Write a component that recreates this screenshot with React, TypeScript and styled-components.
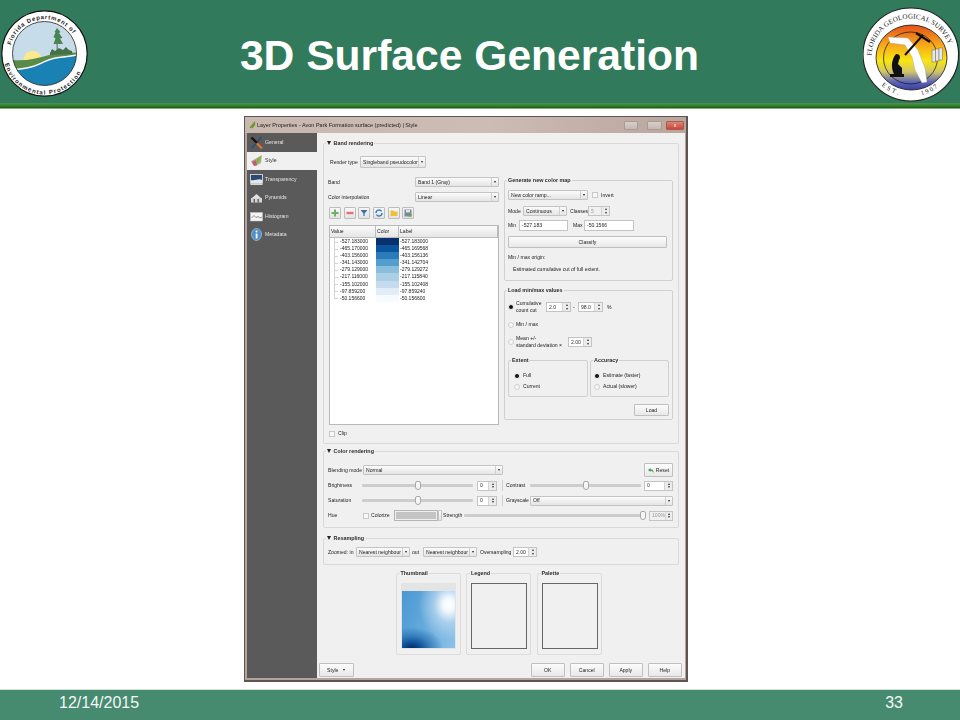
import { FC, ReactNode } from "react";
import styled, { createGlobalStyle } from "styled-components";

const GlobalStyle = createGlobalStyle`
  html, body {
    margin: 0;
    padding: 0;
    background: #fff;
    font-family: "Liberation Sans", Arial, sans-serif;
  }
`;

const Slide = styled.div`
  width: 960px;
  height: 720px;
  display: flex;
  flex-direction: column;
  overflow: hidden;
`;

const Header = styled.header`
  height: 103px;
  display: grid;
  grid-template-columns: 89px 1fr 97px;
  align-items: start;
  background: #317a5b;
`;

const Title = styled.h1`
  margin: 30px 13px 0 0;
  font-size: 42.6px;
  line-height: 50px;
  font-weight: 700;
  color: #fff;
  text-align: center;
`;

const Band = styled.div`
  height: 6px;
  background: linear-gradient(#4f8f5f 0, #3c8a32 30%, #2c7420 60%, #1c5a18 80%, #d8e0d8 100%);
`;

const Stage = styled.main`
  height: 580px;
  padding: 7px 0 0 244px;
  box-sizing: border-box;
`;

const Footer = styled.footer`
  height: 31px;
  box-sizing: border-box;
  padding: 3px 57px 0 59px;
  display: flex;
  justify-content: space-between;
  border-top: 1px solid #cfe0d8;
  background: #468b70;
  color: #f4f8f6;
  font-size: 16px;
  line-height: 20px;
`;

const Window = styled.div`
  width: 444px;
  height: 566px;
  box-sizing: border-box;
  display: flex;
  flex-direction: column;
  border: 1px solid #5f5552;
  border-width: 1px 2px 2px 1px;
  background: #f0f0f0;
  color: #222;
  font-size: 5.1px;
  line-height: 7px;
  filter: blur(0.25px);
`;

const TitleBar = styled.div`
  height: 16px;
  flex: none;
  display: flex;
  align-items: center;
  gap: 1px;
  padding: 0 2px 0 4px;
  background: linear-gradient(90deg, #c9b8b0, #cdbcb4 55%, #b9a69e);
  color: #222;
  font-size: 5.5px;
`;

const TitleText = styled.span`
  flex: 1;
`;

const WinButton = styled.span<{ $w: number; $gap?: number; $close?: boolean }>`
  width: ${({ $w }) => $w}px;
  height: 7px;
  margin-right: ${({ $gap }) => $gap ?? 0}px;
  border: 1px solid ${({ $close }) => ($close ? "#b0564a" : "#a99a94")};
  border-radius: 1px;
  background: ${({ $close }) =>
    $close ? "linear-gradient(#dc8578, #c8473a)" : "linear-gradient(#d8cfca, #c4b8b2)"};
  color: #fff;
  font-size: 5px;
  line-height: 7px;
  text-align: center;
`;

const WindowBody = styled.div`
  flex: 1;
  min-height: 0;
  display: flex;
  border-left: 2px solid #b5a49c;
  border-right: 1px solid #b5a49c;
  border-bottom: 2px solid #b5a49c;
`;

const Sidebar = styled.nav`
  width: 70px;
  flex: none;
  background: #5a5a5a;
`;

const NavItem = styled.div<{ $active?: boolean }>`
  height: 18.5px;
  display: flex;
  align-items: center;
  gap: 2px;
  padding-left: 3px;
  background: ${({ $active }) => ($active ? "#f0f0f0" : "transparent")};
  color: ${({ $active }) => ($active ? "#333" : "#e4e4e4")};
  font-size: 5.2px;
`;

const NavIcon = styled.svg`
  width: 13px;
  height: 13px;
  flex: none;
`;

const Panel = styled.section`
  flex: 1;
  min-width: 0;
  display: flex;
  flex-direction: column;
  padding-top: 10px;
`;

const Group = styled.div<{ $h: number; $mt?: number }>`
  position: relative;
  height: ${({ $h }) => $h}px;
  margin: ${({ $mt }) => $mt ?? 0}px 6px 0;
  box-sizing: border-box;
  border: 1px solid #d9d9d9;
  border-radius: 2px;
`;

const Legend = styled.span<{ $left?: number }>`
  position: absolute;
  top: -4px;
  left: ${({ $left }) => $left ?? 2}px;
  padding: 0 1px;
  background: #f0f0f0;
  color: #2c2c2c;
  font-size: 5.4px;
  font-weight: 700;
  white-space: nowrap;
`;

const Triangle = styled.i`
  display: inline-block;
  margin-right: 2.5px;
  border: 2.5px solid transparent;
  border-top: 4px solid #222;
  border-bottom: 0;
  vertical-align: 0.5px;
`;

const BandBody = styled.div`
  padding: 12px 4px 0 4px;
`;

const ResampleBody = styled.div`
  padding: 8px 4px 0 4px;
`;

const ColorBody = styled.div`
  padding: 11px 5px 0 4px;
`;

const Row = styled.div<{ $gap?: number; $h?: number; $mt?: number }>`
  display: flex;
  align-items: center;
  gap: ${({ $gap }) => $gap ?? 3}px;
  height: ${({ $h }) => $h ?? 11}px;
  margin-top: ${({ $mt }) => $mt ?? 0}px;
  white-space: nowrap;
`;

const Columns = styled.div`
  display: grid;
  grid-template-columns: 171px 169px;
  column-gap: 5px;
  margin-top: 9px;
`;

const Column = styled.div`
  display: flex;
  flex-direction: column;
`;

const Label = styled.span<{ $w?: number; $ml?: number }>`
  flex: ${({ $w }) => ($w ? "none" : "0 1 auto")};
  width: ${({ $w }) => ($w ? `${$w}px` : "auto")};
  margin-left: ${({ $ml }) => $ml ?? 0}px;
`;

const SelectBox = styled.div<{ $w: number; $ml?: number; $h?: number; $bare?: boolean }>`
  width: ${({ $w }) => $w}px;
  height: ${({ $h }) => $h ?? 10}px;
  margin-left: ${({ $ml }) => $ml ?? 0}px;
  flex: none;
  box-sizing: border-box;
  display: flex;
  align-items: center;
  justify-content: space-between;
  padding-left: ${({ $bare }) => ($bare ? 0 : 2)}px;
  border: 1px solid #c4c4c4;
  border-radius: 1px;
  background: linear-gradient(#fbfbfb, #e4e4e4);
  overflow: hidden;
  white-space: nowrap;
`;

const SelectArrow = styled.span`
  width: 7px;
  height: 100%;
  flex: none;
  box-sizing: border-box;
  display: flex;
  align-items: center;
  justify-content: center;
  border-left: 1px solid #cfcfcf;
  &::after {
    content: "";
    border: 1.5px solid transparent;
    border-top: 2.5px solid #222;
    border-bottom: 0;
  }
`;

const Select: FC<{ w: number; h?: number; ml?: number; children: ReactNode }> = ({
  w,
  h,
  ml,
  children,
}) => (
  <SelectBox $w={w} $h={h} $ml={ml}>
    <span>{children}</span>
    <SelectArrow />
  </SelectBox>
);

const SpinBox = styled.div<{ $w: number; $ml?: number; $off?: boolean }>`
  width: ${({ $w }) => $w}px;
  height: 10px;
  margin-left: ${({ $ml }) => $ml ?? 0}px;
  flex: none;
  box-sizing: border-box;
  display: flex;
  justify-content: space-between;
  align-items: center;
  padding-left: 2px;
  border: 1px solid #c4c4c4;
  background: ${({ $off }) => ($off ? "#f0f0f0" : "#fff")};
  color: ${({ $off }) => ($off ? "#999" : "#333")};
`;

const SpinArrows = styled.span`
  width: 7px;
  height: 100%;
  display: flex;
  flex-direction: column;
  align-items: center;
  justify-content: space-evenly;
  background: #ececec;
  border-left: 1px solid #d4d4d4;
  &::before {
    content: "";
    border: 1.5px solid transparent;
    border-bottom: 2px solid #333;
    border-top: 0;
  }
  &::after {
    content: "";
    border: 1.5px solid transparent;
    border-top: 2px solid #333;
    border-bottom: 0;
  }
`;

const Spin: FC<{ w: number; ml?: number; off?: boolean; children: ReactNode }> = ({
  w,
  ml,
  off,
  children,
}) => (
  <SpinBox $w={w} $ml={ml} $off={off}>
    <span>{children}</span>
    <SpinArrows />
  </SpinBox>
);

const Input = styled.div<{ $w: number }>`
  width: ${({ $w }) => $w}px;
  height: 11px;
  flex: none;
  box-sizing: border-box;
  padding: 1px 2px;
  border: 1px solid #c4c4c4;
  background: #fff;
`;

const Check = styled.span<{ $ml?: number }>`
  width: 6px;
  height: 6px;
  flex: none;
  margin-left: ${({ $ml }) => $ml ?? 0}px;
  box-sizing: border-box;
  border: 1px solid #c8c8c8;
  background: #f8f8f8;
`;

const Radio = styled.span<{ $on?: boolean }>`
  width: 6px;
  height: 6px;
  flex: none;
  box-sizing: border-box;
  border-radius: 50%;
  border: 1px solid ${({ $on }) => ($on ? "#f0f0f0" : "#cfcfcf")};
  background: ${({ $on }) => ($on ? "#111" : "#f8f8f8")};
`;

const ToolBar = styled.div`
  display: flex;
  gap: 2.7px;
  margin: 5px 0 6px 1px;
`;

const ToolButton = styled.span`
  width: 12px;
  height: 12px;
  box-sizing: border-box;
  display: flex;
  align-items: center;
  justify-content: center;
  border: 1px solid #bdbdbd;
  border-radius: 1px;
  background: linear-gradient(#f6f6f6, #e4e4e4);
`;

const ToolIcon = styled.svg`
  width: 8px;
  height: 8px;
`;

const Table = styled.div`
  margin-left: 1px;
  width: 170px;
  height: 200px;
  box-sizing: border-box;
  border: 1px solid #b9b9b9;
  background: #fff;
`;

const TableHead = styled.div`
  height: 11px;
  display: grid;
  grid-template-columns: 46px 23px 1fr;
  background: linear-gradient(#fafafa, #e6e6e6);
  border-bottom: 1px solid #bcbcbc;
`;

const HeadCell = styled.span`
  padding: 2px 1px 0 1px;
  border-right: 1px solid #bcbcbc;
`;

const DataRow = styled.div`
  height: 7.1px;
  display: grid;
  grid-template-columns: 46px 23px 1fr;
  line-height: 7.1px;
  font-size: 5px;
`;

const ValueCell = styled.span<{ $last?: boolean }>`
  position: relative;
  padding-left: 10px;
  &::before {
    content: "";
    position: absolute;
    left: 4px;
    top: 0;
    width: 4px;
    height: ${({ $last }) => ($last ? "3.5px" : "100%")};
    border-left: 1px solid #d4d4d4;
  }
  &::after {
    content: "";
    position: absolute;
    left: 4px;
    top: 3.5px;
    width: 4px;
    border-top: 1px solid #d4d4d4;
  }
`;

const Swatch = styled.span<{ $color: string }>`
  display: block;
  background: ${({ $color }) => $color};
`;

const LabelCell = styled.span`
  padding-left: 1px;
`;

const SubGroup = styled.div<{ $h: number; $mt?: number; $w?: number; $inset?: number }>`
  position: relative;
  height: ${({ $h }) => $h}px;
  width: ${({ $w }) => ($w ? `${$w}px` : "auto")};
  margin-top: ${({ $mt }) => $mt ?? 0}px;
  box-sizing: border-box;
  flex: none;
  padding: 5px 5px 0 ${({ $inset }) => $inset ?? 3}px;
  border: 1px solid #d0d0d0;
  border-radius: 2px;
`;

const PlainButton = styled.div<{ $w?: number; $h?: number; $mt?: number; $ml?: number }>`
  width: ${({ $w }) => ($w ? `${$w}px` : "auto")};
  height: ${({ $h }) => $h ?? 13}px;
  margin: ${({ $mt }) => $mt ?? 0}px 0 0 ${({ $ml }) => $ml ?? 0}px;
  flex: none;
  box-sizing: border-box;
  display: flex;
  align-items: center;
  justify-content: center;
  gap: 2px;
  border: 1px solid #c0c0c0;
  border-radius: 1px;
  background: linear-gradient(#fcfcfc, #e8e8e8);
`;

const Note = styled.div<{ $mt: number; $ml?: number }>`
  margin: ${({ $mt }) => $mt}px 0 0 ${({ $ml }) => $ml ?? 0}px;
`;

const TwoLine = styled.span<{ $w: number }>`
  display: block;
  flex: none;
  width: ${({ $w }) => $w}px;
  line-height: 7px;
`;

const Split = styled.div`
  display: flex;
  gap: 2px;
  margin-top: 11px;
`;

const LoadRow = styled.div`
  display: flex;
  justify-content: flex-end;
  margin: 7px -2px 0 0;
`;

const Slider = styled.div<{ $w: number; $at: string; $ml?: number }>`
  position: relative;
  width: ${({ $w }) => $w}px;
  height: 3px;
  margin-left: ${({ $ml }) => $ml ?? 0}px;
  flex: none;
  border-radius: 1px;
  background: #cdcdcd;
  &::after {
    content: "";
    position: absolute;
    left: ${({ $at }) => $at};
    top: -3px;
    width: 6px;
    height: 9px;
    box-sizing: border-box;
    border: 1px solid #a8a8a8;
    border-radius: 2px 2px 3px 3px;
    background: #f6f6f6;
  }
`;

const Separator = styled.span<{ $ml: number }>`
  width: 1px;
  height: 11px;
  flex: none;
  margin-left: ${({ $ml }) => $ml}px;
  background: #cfcfcf;
`;

const ColorWell = styled.div`
  width: 44px;
  height: 11px;
  flex: none;
  box-sizing: border-box;
  margin-left: 4px;
  border: 1px solid #b4b4b4;
  background: #c4c4c4;
  box-shadow: inset 0 0 0 1px #f0f0f0;
`;

const PreviewRow = styled.div`
  display: flex;
  justify-content: center;
  gap: 5.5px;
  margin-top: 8px;
  padding-right: 5px;
`;

const PreviewBox = styled.div`
  position: relative;
  width: 65px;
  height: 82px;
  box-sizing: border-box;
  padding: 9px 4px 0 4px;
  border: 1px solid #dcdcdc;
  border-radius: 2px;
`;

const Canvas = styled.div`
  width: 56px;
  height: 66px;
  box-sizing: border-box;
  border: 1px solid #666;
`;

const Thumb = styled.div`
  width: 55px;
  height: 66px;
  box-sizing: border-box;
  border: 1px solid #e4e4e4;
  border-top-width: 8px;
  background:
    radial-gradient(ellipse 30px 36px at 88% 24%, #ffffff 0, #f4f9fd 18%, rgba(190, 218, 240, 0.7) 50%, rgba(190, 218, 240, 0) 100%),
    radial-gradient(ellipse 32px 22px at 18% 102%, #05245a 0, #0a4a92 25%, rgba(30, 104, 172, 0.65) 60%, rgba(40, 120, 184, 0) 100%),
    linear-gradient(110deg, #4a98d2 0, #66abdc 50%, #8cc2e8 100%);
`;

const ButtonRow = styled.div`
  display: flex;
  gap: 4.5px;
  margin-top: 8px;
  padding: 0 3px 0 2px;
`;

const DialogButton = styled.div<{ $first?: boolean }>`
  width: 34.5px;
  height: 14px;
  box-sizing: border-box;
  display: flex;
  align-items: center;
  justify-content: center;
  gap: 5px;
  margin-right: ${({ $first }) => ($first ? "auto" : "0")};
  border: 1px solid #c0c0c0;
  border-radius: 1px;
  background: linear-gradient(#fcfcfc, #e8e8e8);
`;

const SmallCaret = styled.i`
  border: 1.5px solid transparent;
  border-top: 2px solid #222;
  border-bottom: 0;
`;

const rampRows = [
  ["-527.183000", "#08306b", "-527.183000"],
  ["-465.170000", "#0b559f", "-465.169568"],
  ["-403.156000", "#2b7bba", "-403.156136"],
  ["-341.143000", "#539ecd", "-341.142704"],
  ["-279.129000", "#89bedc", "-279.129272"],
  ["-217.116000", "#abd0e6", "-217.115840"],
  ["-155.102000", "#c7dbef", "-155.102408"],
  ["-97.859200", "#e0ecf8", "-97.859240"],
  ["-50.156600", "#f7fbff", "-50.156600"],
];

const DepLogo = styled.svg`
  display: block;
  width: 89px;
  height: 103px;
`;

const GeoLogo = styled.svg`
  display: block;
  width: 97px;
  height: 103px;
`;

const FloridaDep: FC = () => (
  <DepLogo viewBox="0 0 89 103">
    <defs>
      <path id="depTop" d="M10.5 59.5 A34.5 34.5 0 1 1 78.5 59.5" />
      <path id="depBottom" d="M3.5 53.5 A41 41 0 0 0 85.5 53.5" />
      <clipPath id="depClip">
        <circle cx="44.5" cy="53.5" r="32" />
      </clipPath>
    </defs>
    <circle cx="44.5" cy="53.5" r="42.7" fill="#fff" stroke="#111" strokeWidth="1.2" />
    <g clipPath="url(#depClip)">
      <rect x="10" y="20" width="70" height="70" fill="#c6dde9" />
      <circle cx="32.5" cy="60" r="9.2" fill="#fbe88f" />
      <path d="M12 60 Q24 61 33 59 T53 54 T78 53 V72 H12 Z" fill="#5a8a48" />
      <path d="M12 69 Q30 68 40 63 T57 57 T78 54 V90 H12 Z" fill="#fff" />
      <path d="M12 70.5 Q30 69.5 40 64.5 T57 58.5 T78 55.5 V90 H12 Z" fill="#1a81b5" />
      <path d="M56.6 52 h1 v-22 h-1z" fill="#6a6248" />
      <path d="M57 28 L60.5 32 L59 33 L62.5 38 L60 38.5 L63 44 L53.5 44 L55.5 38.5 L53.5 37 L55.5 32.5 L54.5 32 Z" fill="#4a8452" />
      <path d="M50 53 L52 49 L55 51 L59 48 L63 50 L66 47 L69 50 L72 51 L72 54 L50 55 Z" fill="#45704a" />
    </g>
    <circle cx="44.5" cy="53.5" r="32" fill="none" stroke="#222" strokeWidth="0.8" />
    <text fontFamily="Liberation Sans" fontSize="6" fontWeight="700" fill="#222" letterSpacing="0.8">
      <textPath href="#depTop" startOffset="12%">Florida Department of</textPath>
    </text>
    <text fontFamily="Liberation Sans" fontSize="6" fontWeight="700" fill="#222" letterSpacing="1.1">
      <textPath href="#depBottom" startOffset="8%">Environmental Protection</textPath>
    </text>
  </DepLogo>
);

const FloridaGeo: FC = () => (
  <GeoLogo viewBox="0 0 97 103">
    <defs>
      <linearGradient id="geoSky" x1="0" y1="0" x2="0" y2="1">
        <stop offset="0" stopColor="#e4501c" />
        <stop offset="0.28" stopColor="#f6a21a" />
        <stop offset="0.55" stopColor="#f8e612" />
        <stop offset="0.72" stopColor="#d0c468" />
        <stop offset="0.88" stopColor="#5a62b8" />
        <stop offset="1" stopColor="#3a3ea0" />
      </linearGradient>
      <path id="geoTop" d="M8.5 57 A39.5 38.5 0 0 1 87.5 57" />
      <path id="geoBottom" d="M4.3 54.5 A43.5 42 0 0 0 91.3 54.5" />
    </defs>
    <ellipse cx="47.8" cy="54.5" rx="47.8" ry="46.5" fill="#fff" stroke="#222" strokeWidth="1.2" />
    <ellipse cx="48.5" cy="57.5" rx="35.5" ry="32.5" fill="url(#geoSky)" stroke="#111" strokeWidth="0.8" />
    <ellipse cx="47.5" cy="58" rx="27" ry="26" fill="none" stroke="#111" strokeWidth="0.7" />
    <path d="M25 37 L45 38 L55 50 L62 68 L64 82 L59 83 L52 70 L49 57 L42 45 L27 43 Z" fill="#fff" stroke="#999" strokeWidth="0.4" />
    <path d="M42 55 L60 35" stroke="#111" strokeWidth="2" fill="none" />
    <path d="M53 33 L67 42" stroke="#111" strokeWidth="2.2" fill="none" />
    <path d="M27 77 V74 H31 C28 68 28 60 33 54 C37 54 38 57 36 60 L35 64 L39 68 L39 74 H41 V77 Z" fill="#111" />
    <g fill="#e8e8e8" stroke="#666" strokeWidth="0.5">
      <rect x="69" y="50" width="3.5" height="12" />
      <rect x="72.5" y="49" width="3.5" height="12" />
      <rect x="76" y="48" width="3.5" height="12" />
    </g>
    <text fontFamily="Liberation Serif" fontSize="7" fill="#222" letterSpacing="0.1">
      <textPath href="#geoTop" startOffset="1%">FLORIDA GEOLOGICAL SURVEY</textPath>
    </text>
    <text fontFamily="Liberation Serif" fontSize="6.5" fill="#222" letterSpacing="2.2">
      <textPath href="#geoBottom" startOffset="26%">EST.</textPath>
    </text>
    <text fontFamily="Liberation Serif" fontSize="6.5" fill="#222" letterSpacing="1.8">
      <textPath href="#geoBottom" startOffset="58%">1907</textPath>
    </text>
  </GeoLogo>
);

const navItems: { name: string; active?: boolean; icon: ReactNode }[] = [
  {
    name: "General",
    icon: (
      <>
        <path d="M11.5 1 L2 12" stroke="#2c4a78" strokeWidth="1.5" />
        <path d="M6 6.5 L12 12.5" stroke="#e8742a" strokeWidth="2" />
        <path d="M1.5 1.5 L7 7" stroke="#141414" strokeWidth="2.4" />
      </>
    ),
  },
  {
    name: "Style",
    active: true,
    icon: (
      <>
        <path d="M1 7 L7 4 L12 1 L11 9 L6 12 L3 11 Z" fill="#a9b48c" />
        <path d="M2 8 L6 6 L7 11 L4 12 Z" fill="#c9567b" />
        <path d="M6 5 L11 2 L10 7 L7 9 Z" fill="#8fae4a" />
      </>
    ),
  },
  {
    name: "Transparency",
    icon: (
      <>
        <rect x="0.5" y="1.5" width="12" height="9" fill="#dfe6ec" stroke="#e8e8e8" strokeWidth="0.6" />
        <path d="M1 2 H12 V7 C9 5 5 8 1 7 Z" fill="#2b4a72" />
        <rect x="0.5" y="11" width="12" height="1" fill="#d8d8d8" />
      </>
    ),
  },
  {
    name: "Pyramids",
    icon: (
      <>
        <path d="M6.5 3 L11 7 H2 Z" fill="#e2e2e2" />
        <rect x="1" y="7" width="11" height="4.5" fill="#d4d4d4" />
        <rect x="3.5" y="8" width="1.5" height="3.5" fill="#666" />
        <rect x="7.5" y="8" width="1.5" height="3.5" fill="#666" />
      </>
    ),
  },
  {
    name: "Histogram",
    icon: (
      <>
        <rect x="0.5" y="2.5" width="12" height="8.5" fill="#f4f4f4" stroke="#c4c4c4" strokeWidth="0.5" />
        <path d="M1.5 8 L4 5.5 L6 7.5 L8 6.5 L10 8 L12 7" stroke="#667" strokeWidth="0.7" fill="none" />
      </>
    ),
  },
  {
    name: "Metadata",
    icon: (
      <>
        <ellipse cx="6.5" cy="6.5" rx="5" ry="6" fill="#4e8fc8" stroke="#d8e6f2" strokeWidth="0.5" />
        <rect x="5.7" y="5.5" width="1.8" height="5" fill="#fff" />
        <circle cx="6.5" cy="3.6" r="1" fill="#fff" />
      </>
    ),
  },
];

const toolIcons: ReactNode[] = [
  <path d="M3 0.5 H5 V3 H7.5 V5 H5 V7.5 H3 V5 H0.5 V3 H3 Z" fill="#6fae6a" />,
  <rect x="0.5" y="2.8" width="7" height="2.4" fill="#e4707c" />,
  <path d="M0.5 1 H7.5 L4.6 4.4 V7 H3.4 V4.4 Z" fill="#3f6fa8" />,
  <path d="M1 4 A3 3 0 0 1 6.6 2.5 M7 4 A3 3 0 0 1 1.4 5.5" stroke="#2f7fc4" strokeWidth="1.4" fill="none" />,
  <path d="M0.5 1.5 H3.5 L4.2 2.5 H7.5 V7 H0.5 Z" fill="#eec03a" />,
  <>
    <rect x="0.5" y="0.5" width="7" height="7" fill="#7c8a98" />
    <rect x="2" y="1" width="4" height="2.4" fill="#dfe6ec" />
    <rect x="4.5" y="4.5" width="3" height="3" fill="#62a060" />
  </>,
];

const App: FC = () => (
  <>
    <GlobalStyle />
    <Slide>
      <Header>
        <FloridaDep />
        <Title>3D Surface Generation</Title>
        <FloridaGeo />
      </Header>
      <Band />
      <Stage>
        <Window>
          <TitleBar>
            <svg width="7" height="8" viewBox="0 0 7 8">
              <path d="M1 7 L6 1 M3 7 L6 3" stroke="#6a9a2a" strokeWidth="1.4" />
            </svg>
            <TitleText>Layer Properties - Avon Park Formation surface (predicted) | Style</TitleText>
            <WinButton $w={12} $gap={8} />
            <WinButton $w={13} $gap={3} />
            <WinButton $w={16} $close>
              x
            </WinButton>
          </TitleBar>
          <WindowBody>
            <Sidebar>
              {navItems.map((item) => (
                <NavItem key={item.name} $active={item.active}>
                  <NavIcon viewBox="0 0 13 13">{item.icon}</NavIcon>
                  <span>{item.name}</span>
                </NavItem>
              ))}
            </Sidebar>
            <Panel>
              <Group $h={301}>
                <Legend>
                  <Triangle />
                  Band rendering
                </Legend>
                <BandBody>
                  <Row $h={12} $gap={0}>
                    <Label $ml={2} $w={30}>
                      Render type
                    </Label>
                    <Select w={66} h={12}>
                      Singleband pseudocolor
                    </Select>
                  </Row>
                  <Columns>
                    <Column>
                      <Row $h={10} $gap={0}>
                        <Label $w={87}>Band</Label>
                        <Select w={84}>Band 1 (Gray)</Select>
                      </Row>
                      <Row $h={10} $mt={5} $gap={0}>
                        <Label $w={87}>Color interpolation</Label>
                        <Select w={84}>Linear</Select>
                      </Row>
                      <ToolBar>
                        {toolIcons.map((icon, i) => (
                          <ToolButton key={i}>
                            <ToolIcon viewBox="0 0 8 8">{icon}</ToolIcon>
                          </ToolButton>
                        ))}
                      </ToolBar>
                      <Table>
                        <TableHead>
                          <HeadCell>Value</HeadCell>
                          <HeadCell>Color</HeadCell>
                          <HeadCell>Label</HeadCell>
                        </TableHead>
                        {rampRows.map(([value, color, label], i) => (
                          <DataRow key={value}>
                            <ValueCell $last={i === rampRows.length - 1}>{value}</ValueCell>
                            <Swatch $color={color} />
                            <LabelCell>{label}</LabelCell>
                          </DataRow>
                        ))}
                      </Table>
                      <Row $h={7} $mt={5}>
                        <Check $ml={1} />
                        <span>Clip</span>
                      </Row>
                    </Column>
                    <Column>
                      <SubGroup $h={101} $mt={3}>
                        <Legend>Generate new color map</Legend>
                        <Row $h={10} $mt={4}>
                          <Select w={80}>New color ramp...</Select>
                          <Check $ml={1} />
                          <span>Invert</span>
                        </Row>
                        <Row $h={10} $mt={6} $gap={2}>
                          <Label $w={13}>Mode</Label>
                          <Select w={44}>Continuous</Select>
                          <Label $ml={1} $w={16}>
                            Classes
                          </Label>
                          <Spin w={22} off>
                            5
                          </Spin>
                        </Row>
                        <Row $h={11} $mt={4} $gap={2}>
                          <Label $w={9}>Min</Label>
                          <Input $w={49}>-527.183</Input>
                          <Label $ml={3} $w={9}>
                            Max
                          </Label>
                          <Input $w={50}>-50.1566</Input>
                        </Row>
                        <PlainButton $h={12} $mt={5}>
                          Classify
                        </PlainButton>
                        <Note $mt={6}>Min / max origin:</Note>
                        <Note $mt={5} $ml={5}>
                          Estimated cumulative cut of full extent.
                        </Note>
                      </SubGroup>
                      <SubGroup $h={130} $mt={9}>
                        <Legend>Load min/max values</Legend>
                        <Row $h={14} $mt={4} $gap={2}>
                          <Radio $on />
                          <TwoLine $w={28}>
                            Cumulative
                            <br />
                            count cut
                          </TwoLine>
                          <Spin w={25}>2.0</Spin>
                          <Label $w={3}>-</Label>
                          <Spin w={25}>98.0</Spin>
                          <Label $ml={2}>%</Label>
                        </Row>
                        <Row $h={7} $mt={7} $gap={2}>
                          <Radio />
                          <span>Min / max</span>
                        </Row>
                        <Row $h={14} $mt={7} $gap={2}>
                          <Radio />
                          <TwoLine $w={50}>
                            Mean +/-
                            <br />
                            standard deviation ×
                          </TwoLine>
                          <Spin w={24}>2.00</Spin>
                        </Row>
                        <Split>
                          <SubGroup $h={37} $w={80} $inset={5}>
                            <Legend>Extent</Legend>
                            <Row $h={11} $mt={4}>
                              <Radio $on />
                              <span>Full</span>
                            </Row>
                            <Row $h={11}>
                              <Radio />
                              <span>Current</span>
                            </Row>
                          </SubGroup>
                          <SubGroup $h={37} $w={79} $inset={3}>
                            <Legend>Accuracy</Legend>
                            <Row $h={11} $mt={4}>
                              <Radio $on />
                              <span>Estimate (faster)</span>
                            </Row>
                            <Row $h={11}>
                              <Radio />
                              <span>Actual (slower)</span>
                            </Row>
                          </SubGroup>
                        </Split>
                        <LoadRow>
                          <PlainButton $w={35} $h={12}>
                            Load
                          </PlainButton>
                        </LoadRow>
                      </SubGroup>
                    </Column>
                  </Columns>
                </BandBody>
              </Group>

              <Group $h={77} $mt={7}>
                <Legend>
                  <Triangle />
                  Color rendering
                </Legend>
                <ColorBody>
                  <Row $h={14} $gap={0}>
                    <Label $w={35}>Blending mode</Label>
                    <Select w={140}>Normal</Select>
                    <PlainButton $w={29} $h={14} $ml={141}>
                      <svg width="6" height="5" viewBox="0 0 6 5">
                        <path d="M0 2 L2.5 0 V1.2 C5 1.2 6 3 5.5 5 C5 3.5 4 3 2.5 3 V4 Z" fill="#5a9a5a" />
                      </svg>
                      Reset
                    </PlainButton>
                  </Row>
                  <Row $h={11} $mt={3} $gap={0}>
                    <Label $w={34}>Brightness</Label>
                    <Slider $w={111} $at="48%" />
                    <Spin w={20} ml={4}>
                      0
                    </Spin>
                    <Separator $ml={5} />
                    <Label $w={24} $ml={3}>
                      Contrast
                    </Label>
                    <Slider $w={111} $at="48%" />
                    <Spin w={29} ml={3}>
                      0
                    </Spin>
                  </Row>
                  <Row $h={11} $mt={4} $gap={0}>
                    <Label $w={34}>Saturation</Label>
                    <Slider $w={111} $at="48%" />
                    <Spin w={20} ml={4}>
                      0
                    </Spin>
                    <Separator $ml={5} />
                    <Label $w={24} $ml={3}>
                      Grayscale
                    </Label>
                    <Select w={143}>Off</Select>
                  </Row>
                  <Row $h={11} $mt={4} $gap={0}>
                    <Label $w={35}>Hue</Label>
                    <Check />
                    <Label $ml={2} $w={19}>
                      Colorize
                    </Label>
                    <ColorWell />
                    <SelectBox $w={4} $h={11} $bare />
                    <Label $ml={1} $w={21}>
                      Strength
                    </Label>
                    <Slider $w={181} $at="97%" />
                    <Spin w={24} ml={4} off>
                      100%
                    </Spin>
                  </Row>
                </ColorBody>
              </Group>

              <Group $h={27} $mt={10}>
                <Legend>
                  <Triangle />
                  Resampling
                </Legend>
                <ResampleBody>
                  <Row $h={10} $gap={2}>
                    <Label $w={26}>Zoomed: in</Label>
                    <Select w={54}>Nearest neighbour</Select>
                    <Label $w={9}>out</Label>
                    <Select w={54}>Nearest neighbour</Select>
                    <Label $ml={1} $w={31}>
                      Oversampling
                    </Label>
                    <Spin w={24}>2.00</Spin>
                  </Row>
                </ResampleBody>
              </Group>

              <PreviewRow>
                <PreviewBox>
                  <Legend $left={3}>Thumbnail</Legend>
                  <Thumb />
                </PreviewBox>
                <PreviewBox>
                  <Legend $left={3}>Legend</Legend>
                  <Canvas />
                </PreviewBox>
                <PreviewBox>
                  <Legend $left={3}>Palette</Legend>
                  <Canvas />
                </PreviewBox>
              </PreviewRow>

              <ButtonRow>
                <DialogButton $first>
                  Style
                  <SmallCaret />
                </DialogButton>
                <DialogButton>OK</DialogButton>
                <DialogButton>Cancel</DialogButton>
                <DialogButton>Apply</DialogButton>
                <DialogButton>Help</DialogButton>
              </ButtonRow>
            </Panel>
          </WindowBody>
        </Window>
      </Stage>
      <Footer>
        <span>12/14/2015</span>
        <span>33</span>
      </Footer>
    </Slide>
  </>
);

export default App;
